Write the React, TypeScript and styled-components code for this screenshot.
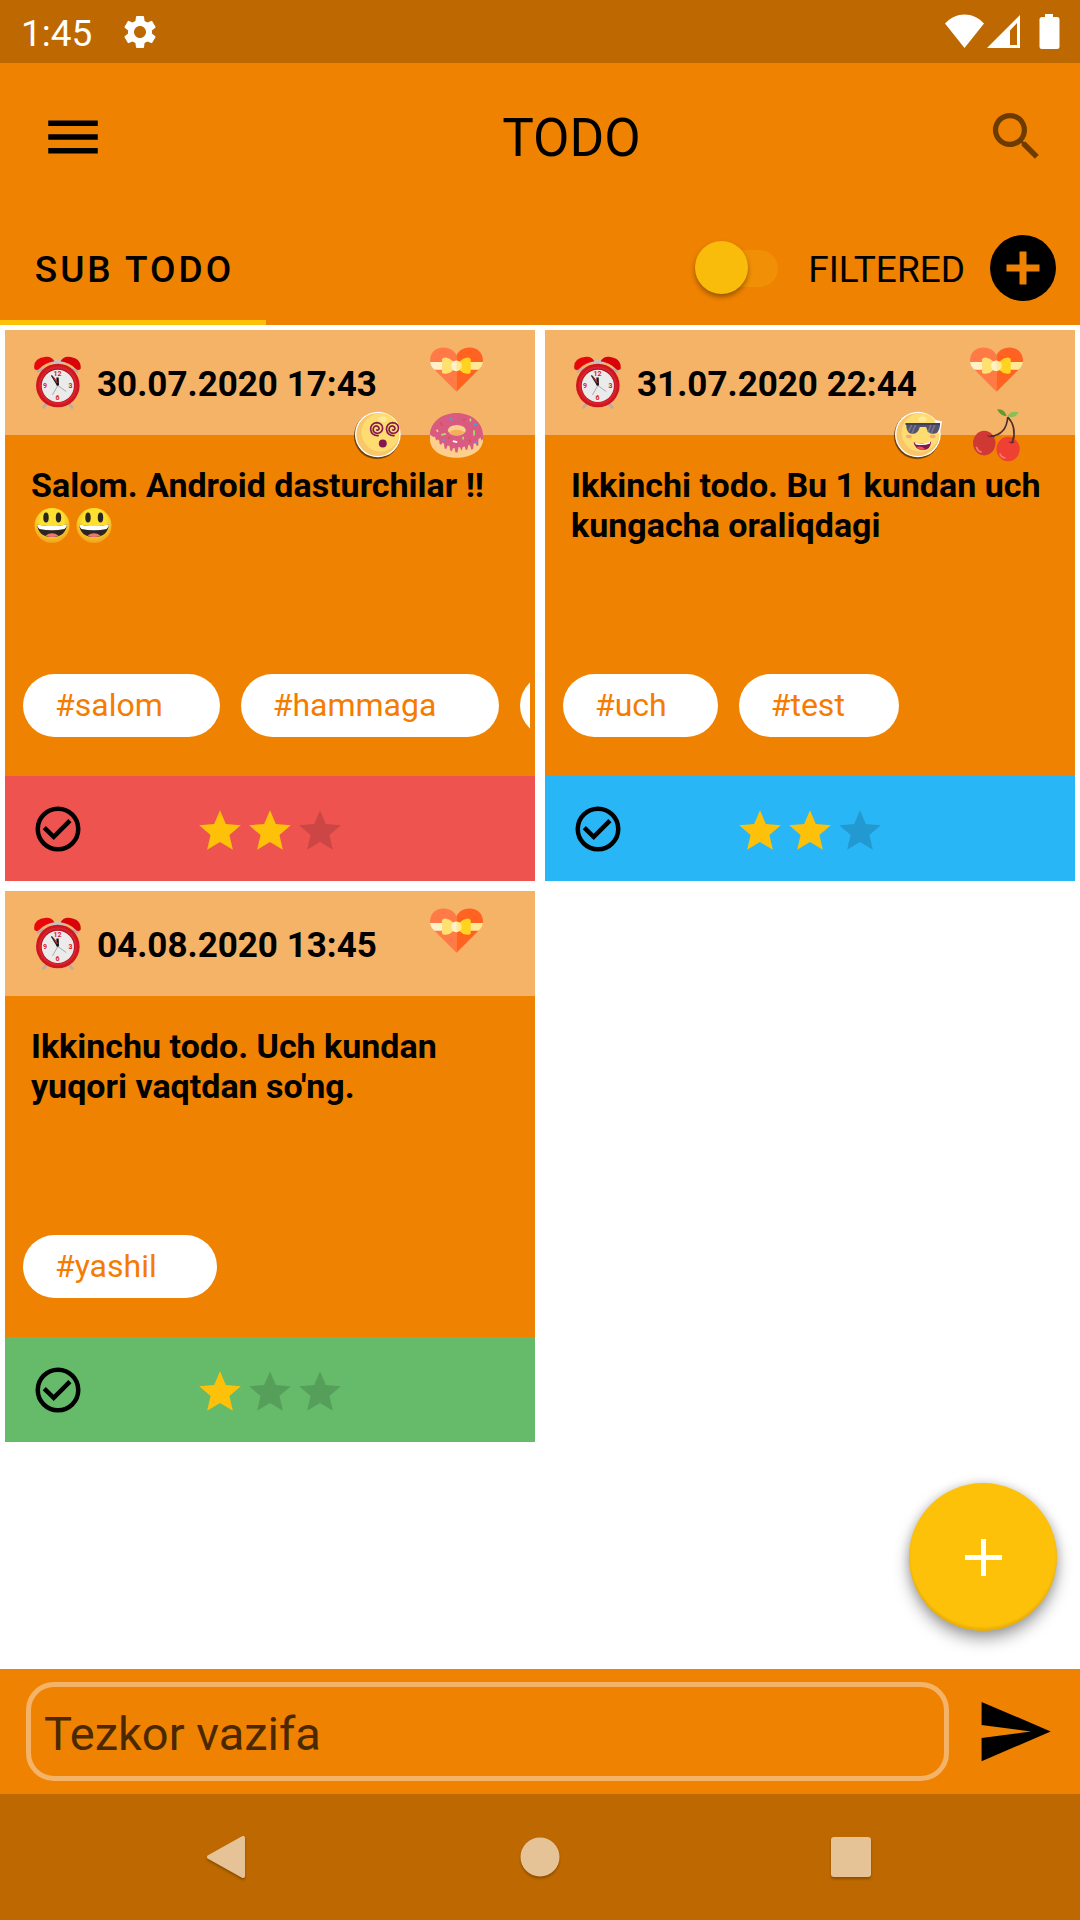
import React, { useState } from "react";
import styled, { createGlobalStyle } from "styled-components";
import { MdMenu, MdSearch, MdSettings, MdSend, MdStar } from "react-icons/md";

const color = {
  primary: "#ef8200",
  primaryDark: "#bd6800",
  accent: "#fdc109",
  soft: "#f5b368",
  tag: "#f57c00",
  nav: "#e5c397",
};

const GlobalStyle = createGlobalStyle`
  *, *::before, *::after { box-sizing: border-box; }
  body { margin: 0; background: #fff; }
  body, button, input { font-family: Roboto, "Liberation Sans", sans-serif; }
  svg { display: block; }
`;

const Screen = styled.div`
  min-height: 100vh;
  display: flex;
  flex-direction: column;
  color: #000;
`;

const PlainButton = styled.button`
  display: flex;
  align-items: center;
  justify-content: center;
  flex: none;
  padding: 0;
  border: 0;
  background: none;
  color: inherit;
  cursor: pointer;
`;

/* Status bar */
const StatusBar = styled.div`
  height: 63px;
  display: flex;
  align-items: center;
  padding: 0 19px 0 21px;
  background: ${color.primaryDark};
  color: #fff;
`;
const Clock = styled.time`
  padding-top: 4px;
  font-size: 37px;
  line-height: 44px;
  margin-right: 28px;
`;
const StatusIcons = styled.div`
  display: flex;
  margin-left: auto;
`;

/* App bar */
const Header = styled.header`
  background: ${color.primary};
`;
const Toolbar = styled.div`
  height: 147px;
  display: flex;
  align-items: center;
  padding-right: 19px;
`;
const MenuButton = styled(PlainButton)`
  width: 146px;
  height: 100px;
`;
const SearchButton = styled(PlainButton)`
  width: 90px;
  height: 90px;
  opacity: 0.54;
`;
const Title = styled.h1`
  flex: 1;
  margin: 0;
  padding: 2px 0 0 26px;
  text-align: center;
  font-size: 53px;
  line-height: 60px;
  font-weight: 400;
`;
const TabRow = styled.div`
  height: 115px;
  display: flex;
  align-items: center;
  padding-right: 24px;
`;
const Tab = styled(PlainButton)`
  width: 266px;
  align-self: stretch;
  padding: 9px 0 0 3px;
  border-bottom: 5px solid ${color.accent};
  font-size: 37px;
  line-height: 44px;
  font-weight: 500;
  letter-spacing: 3px;
`;
const FilterLabel = styled.label`
  display: flex;
  align-items: center;
  gap: 30px;
  margin: 0 25px 0 auto;
  font-size: 37px;
  line-height: 44px;
`;
const LabelText = styled.span`
  padding-top: 4px;
`;
const Switch = styled.input`
  appearance: none;
  position: relative;
  width: 83px;
  height: 54px;
  margin: 0;
  &::before {
    content: "";
    position: absolute;
    inset: 9px 0 8px 8px;
    border-radius: 19px;
    background: #f19006;
  }
  &::after {
    content: "";
    position: absolute;
    left: 0;
    top: 0;
    width: 53px;
    height: 53px;
    border-radius: 50%;
    background: #f9bc0b;
    box-shadow: 0 3px 5px rgba(0, 0, 0, 0.35);
  }
  &:checked::after {
    left: 30px;
  }
`;

/* Cards */
const Main = styled.main`
  flex: 1;
  position: relative;
  padding: 5px;
`;
const CardGrid = styled.div`
  display: grid;
  grid-template-columns: repeat(2, minmax(0, 1fr));
  gap: 10px;
`;
const Card = styled.article`
  position: relative;
  display: flex;
  flex-direction: column;
  background: ${color.primary};
`;
const CardHeader = styled.div`
  height: 105px;
  display: flex;
  align-items: center;
  gap: 16px;
  padding: 0 29px;
  background: ${color.soft};
`;
const DateText = styled.time`
  padding-top: 4px;
  font-size: 35px;
  line-height: 40px;
  font-weight: 700;
`;
const Stickers = styled.div`
  position: absolute;
  top: 13px;
  right: 52px;
  display: grid;
  grid-template-columns: repeat(2, 53px);
  gap: 13px 25px;
  direction: rtl;
`;
const StickerSlot = styled.span<{ $wide?: boolean }>`
  grid-column: ${(p) => (p.$wide ? "1 / -1" : "auto")};
  width: 53px;
  height: 53px;
`;
const CardBody = styled.div`
  height: 341px;
  display: flex;
  flex-direction: column;
  justify-content: space-between;
  padding: 30px 5px 39px;
`;
const CardText = styled.p`
  margin: 0;
  padding: 0 21px;
  font-size: 34px;
  line-height: 40px;
  font-weight: 700;
`;
const Smile = styled.svg`
  display: inline-block;
  width: 42px;
  height: 40px;
  vertical-align: top;
`;
const Tags = styled.ul`
  display: flex;
  gap: 21px;
  margin: 0;
  padding: 0 0 0 13px;
  overflow: hidden;
  list-style: none;
`;
/* Longer tags get a little more room after their text. */
const Tag = styled.li<{ $chars: number }>`
  flex: none;
  height: 63px;
  min-width: 90px;
  padding: 0 ${(p) => 39 + p.$chars * 3}px 0 32px;
  border-radius: 32px;
  background: #fff;
  color: ${color.tag};
  font-size: 32px;
  line-height: 63px;
`;
const CardFooter = styled.div<{ $tone: string }>`
  height: 105px;
  display: grid;
  grid-template-columns: 1fr auto 1fr;
  align-items: center;
  padding: 0 26px;
  background: ${(p) => p.$tone};
`;
const DoneButton = styled(PlainButton)`
  width: 54px;
  height: 54px;
`;
const Rating = styled.div`
  display: flex;
  padding-top: 5px;
`;
const StarIcon = styled(MdStar)<{ $on: boolean }>`
  width: 50px;
  height: 50px;
  color: ${(p) => (p.$on ? color.accent : "rgba(0, 0, 0, 0.15)")};
`;

const Fab = styled(PlainButton)`
  position: absolute;
  right: 23px;
  bottom: 38px;
  width: 148px;
  height: 148px;
  border-radius: 50%;
  background: ${color.accent};
  color: #fff;
  box-shadow: 0 8px 16px rgba(0, 0, 0, 0.36), 0 0 10px rgba(0, 0, 0, 0.14), inset 0 -3px 2px rgba(160, 110, 0, 0.2);
`;

/* Bottom */
const QuickForm = styled.form`
  display: flex;
  align-items: center;
  gap: 26px;
  padding: 13px 26px;
  background: ${color.primary};
`;
const QuickInput = styled.input`
  flex: 1;
  min-width: 0;
  height: 99px;
  padding: 4px 13px 0;
  border: 5px solid ${color.soft};
  border-radius: 28px;
  background: transparent;
  font-size: 47px;
  line-height: 56px;
  color: #000;
  outline: none;
  &::placeholder {
    color: #4a2800;
    opacity: 1;
  }
`;
const NavBar = styled.nav`
  height: 126px;
  display: flex;
  align-items: center;
  justify-content: center;
  gap: 209px;
  background: ${color.primaryDark};
`;
const NavButton = styled(PlainButton)`
  width: 102px;
  height: 102px;
  svg {
    filter: drop-shadow(0 2px 1px rgba(0, 0, 0, 0.25));
  }
`;

const SignalIcons = () => (
  <svg width="116" height="36" viewBox="0 0 116 36" fill="#fff" role="img" aria-label="Wi-Fi, signal, battery">
    <path d="M0 9.500C11-2.600 28-2.600 39 9.500L19.500 34z" />
    <path fillRule="evenodd" d="M42 34L75 1v33zM65 16.500V31h7V9z" />
    <path d="M100 0h8v3h4q2.500 0 2.500 2.500v27q0 2.500-2.500 2.500H97q-2.500 0-2.500-2.500v-27Q94.500 3 97 3h3z" />
  </svg>
);

const AlarmIcon = () => (
  <svg width="47" height="53" viewBox="0 0 140 158" aria-hidden="true">
    <path d="M38 142L26 156M104 142l12 14M50 32L8 46M90 32l42 14" stroke="#b9aca4" strokeWidth="8" />
    <path d="M42 24L60 12h20l18 12z" fill="#c9c0b8" />
    <path d="M1 38Q-4 6 36 2Q54 1 61 16Q34 20 16 38Q8 46 1 38z" fill="#e8080c" />
    <path d="M139 38Q142 6 104 2Q86 1 79 16Q106 20 124 38Q132 46 139 38z" fill="#d90409" />
    <circle cx="71" cy="88" r="65" fill="#cf1620" />
    <circle cx="71" cy="88" r="57" fill="#d9222b" />
    <circle cx="71" cy="88" r="50" fill="#a5121a" />
    <circle cx="71" cy="89" r="48" fill="#ebebeb" />
    <g fill="#e01822" fontFamily="Roboto, sans-serif" fontSize="21" fontWeight="700" textAnchor="middle">
      <text x="70" y="60">12</text>
      <text x="109" y="94">3</text>
      <text x="70" y="130">6</text>
      <text x="33" y="96">9</text>
    </g>
    <path d="M71 88L52 58" stroke="#222" strokeWidth="4" />
    <path d="M71 88L70 64" stroke="#111" strokeWidth="7" />
    <path d="M71 80L57 62" stroke="#c6141c" strokeWidth="3" />
    <path d="M71 88L96 106M71 88L55 116" stroke="#888" strokeWidth="2" />
  </svg>
);

const HeartSticker = () => (
  <svg width="53" height="53" viewBox="0 0 160 160" aria-hidden="true">
    <path d="M80 38C68 3 0 3 0 54Q1 68 10 77L80 147z" fill="#ff7a47" />
    <path d="M80 38C92 3 160 3 160 54Q159 68 150 77L80 147z" fill="#ff6221" />
    <path d="M0 57h80v24H14Q2 72 0 57z" fill="#fff2c9" />
    <path d="M80 57h80q-2 15-14 24H80z" fill="#ffe994" />
    <path d="M36 50Q38 43 48 44Q60 46 70 56V82Q60 92 48 93Q38 94 36 88z" fill="#ffe070" />
    <path d="M123 50Q121 43 112 44Q99 46 90 56V82Q99 92 112 93Q121 94 123 88z" fill="#ffd31f" />
    <circle cx="80" cy="69" r="16" fill="#ffe994" />
    <path d="M80 53a16 16 0 0 0 0 32z" fill="#fff2c9" />
  </svg>
);

const DonutSticker = () => (
  <svg width="53" height="53" viewBox="0 0 160 160" aria-hidden="true">
    <path d="M0 78H160V94C158 126 124 147 80 147S2 126 0 94z" fill="#fcd08c" />
    <path
      d="M0 78C0 40 36 12 80 12s80 28 80 66v12l-4 6-4-10-6 6v18l-5 2-3-9-6 1-2 17-5 2-4-13-5-2-3 14-5 2-3-11-6 2-4 11-4-10-5-1-3 16h-6l-3-14-5 2-3 8-5-2-2-13-6-2-4 11-5-2-2-15-5-2-3 6-5-2-1-11-4-4-3 4-4-4-2-9-3 3z"
      fill="#d95b82"
    />
    <ellipse cx="81" cy="64" rx="27" ry="16" fill="#fcd08c" />
    <path d="M57 70Q81 55 105 70Q81 90 57 70z" fill="#f5ae5e" />
    <g strokeWidth="5" fill="none">
      <path d="M60 26l8 9M130 46h12M40 98l4-7M136 104l6-6" stroke="#4e9fd8" />
      <path d="M122 29v9M34 78l14-3M133 64v16M100 84v8" stroke="#a6e26c" />
      <path d="M32 40l5 11M100 35l7-4M117 93l6 6M55 84l5 4" stroke="#e0503c" />
      <path d="M20 62l4 7" stroke="#fcd08c" />
      <path d="M69 97l13 3" stroke="#fff" />
    </g>
  </svg>
);

const CherrySticker = () => (
  <svg width="53" height="53" viewBox="0 0 160 160" aria-hidden="true">
    <path d="M114 24Q110 78 62 82M114 24Q142 54 129 100" fill="none" stroke="#4e2b30" strokeWidth="5" />
    <path d="M111 22Q91 22 82 1Q104-2 111 22z" fill="#5f9a31" />
    <path d="M112 22Q124 4 147 10Q136 30 112 22z" fill="#86c057" />
    <ellipse cx="43" cy="103" rx="34" ry="37" fill="#cf3833" />
    <ellipse cx="115" cy="121" rx="35" ry="37" fill="#ee4033" />
    <path d="M52 80Q61 86 70 80M118 99Q126 105 134 99" fill="none" stroke="#8e2222" strokeWidth="4" />
    <path d="M62 82L76 81M132 84L127 102" fill="none" stroke="#4e2b30" strokeWidth="5" />
    <path d="M19 114Q23 128 35 130M90 134Q94 146 107 148" fill="none" stroke="#f27f76" strokeWidth="5" />
  </svg>
);

const FaceBase = () => (
  <>
    <circle cx="75" cy="83" r="69" fill="#000" opacity="0.25" />
    <circle cx="76" cy="80" r="70" fill="#000" opacity="0.4" />
    <circle cx="78" cy="77" r="69" fill="#fff" />
    <circle cx="78" cy="77" r="65" fill="#f9c76b" />
    <ellipse cx="86" cy="71" rx="57" ry="58" fill="#fedc70" />
    <ellipse cx="92" cy="31" rx="13" ry="8" fill="#ffe99a" />
  </>
);

const DizzySticker = () => (
  <svg width="53" height="53" viewBox="0 0 160 160" aria-hidden="true">
    <FaceBase />
    <g fill="none" stroke="#83184f" strokeWidth="5">
      <path d="M81 80C50 84 48 42 75 41C101 43 96 77 73 73C56 66 66 47 77 52C87 58 79 68 73 62" />
      <path d="M129 80C98 84 96 42 123 41C149 43 144 77 121 73C104 66 114 47 125 52C135 58 127 68 121 62" />
    </g>
    <circle cx="93" cy="104" r="12" fill="#83184f" />
  </svg>
);

const CoolSticker = () => (
  <svg width="53" height="53" viewBox="0 0 160 160" aria-hidden="true">
    <FaceBase />
    <path d="M128 32L151 38L148 56L142 76L134 50z" fill="#fff" />
    <path d="M41 42H145V50Q142 74 126 75Q108 76 103 54H84Q78 76 61 75Q44 74 43 50z" fill="#54526b" />
    <path d="M60 46L50 68M72 46L60 74M118 46l-9 24M130 46l-12 28" stroke="#77768e" strokeWidth="5" />
    <path d="M41 42H145V48H41z" fill="#41405a" />
    <ellipse cx="51" cy="83" rx="9" ry="5" fill="#f9a879" />
    <ellipse cx="123" cy="83" rx="9" ry="5" fill="#f9a879" />
    <path d="M65 100Q94 108 118 99Q117 123 94 124Q69 122 65 100z" fill="#83184f" />
    <path d="M72 107Q94 112 115 104V99Q94 108 68 101z" fill="#fff" />
    <path d="M74 115Q90 110 100 121Q86 127 74 115z" fill="#fb4b50" />
  </svg>
);

const SmileIcon = () => (
  <Smile viewBox="0 0 42 40" role="img" aria-label="😃">
    <defs>
      <radialGradient id="smile" cx="50%" cy="35%" r="65%">
        <stop offset="50%" stopColor="#fde030" />
        <stop offset="100%" stopColor="#f2a01e" />
      </radialGradient>
    </defs>
    <circle cx="21" cy="20.500" r="17.500" fill="url(#smile)" />
    <ellipse cx="15" cy="12.500" rx="2.700" ry="5" fill="#2b2622" />
    <ellipse cx="27.500" cy="12.500" rx="2.700" ry="5" fill="#2b2622" />
    <path d="M6 19.500Q21 23 36 19.500Q34.500 32 21 32Q7.500 32 6 19.500z" fill="#2b2622" />
    <path d="M6 19.500Q21 22.500 36 19.500Q35.500 23 33.500 24Q21 26.500 8.500 24Q6.500 23 6 19.500z" fill="#fff" />
    <path d="M14.500 30.500Q21 26 27.500 30.500Q21 33.500 14.500 30.500z" fill="#ed7770" />
  </Smile>
);

const stickerIcons = {
  heart: HeartSticker,
  donut: DonutSticker,
  cherry: CherrySticker,
  dizzy: DizzySticker,
  cool: CoolSticker,
};

type Todo = {
  date: string;
  text: string;
  smiles?: number;
  stickers: (keyof typeof stickerIcons)[];
  tags: string[];
  stars: number;
  tone: string;
};

const todos: Todo[] = [
  {
    date: "30.07.2020 17:43",
    text: "Salom. Android dasturchilar !! ",
    smiles: 2,
    stickers: ["heart", "donut", "dizzy"],
    tags: ["#salom", "#hammaga", ""],
    stars: 2,
    tone: "#ef5350",
  },
  {
    date: "31.07.2020 22:44",
    text: "Ikkinchi todo. Bu 1 kundan uch kungacha oraliqdagi",
    stickers: ["heart", "cherry", "cool"],
    tags: ["#uch", "#test"],
    stars: 2,
    tone: "#29b6f6",
  },
  {
    date: "04.08.2020 13:45",
    text: "Ikkinchu todo. Uch kundan yuqori vaqtdan so'ng.",
    stickers: ["heart"],
    tags: ["#yashil"],
    stars: 1,
    tone: "#66bb6a",
  },
];

const TodoCard = ({ todo }: { todo: Todo }) => (
  <Card>
    <CardHeader>
      <AlarmIcon />
      <DateText>{todo.date}</DateText>
    </CardHeader>
    <CardBody>
      <CardText>
        {todo.text}
        {Array.from({ length: todo.smiles ?? 0 }, (_, i) => (
          <SmileIcon key={i} />
        ))}
      </CardText>
      <Tags>
        {todo.tags.map((tag) => (
          <Tag key={tag} $chars={tag.length}>
            {tag}
          </Tag>
        ))}
      </Tags>
    </CardBody>
    <CardFooter $tone={todo.tone}>
      <DoneButton type="button" aria-label="Done">
        <svg width="54" height="54" viewBox="0 0 24 24" fill="none" stroke="#000" strokeWidth="2">
          <circle cx="12" cy="12" r="9" />
          <path d="M5.900 11.400L10.100 15.500L17.300 8.300" />
        </svg>
      </DoneButton>
      <Rating role="img" aria-label={`${todo.stars} / 3`}>
        {[1, 2, 3].map((n) => (
          <StarIcon key={n} $on={n <= todo.stars} />
        ))}
      </Rating>
    </CardFooter>
    <Stickers>
      {todo.stickers.map((name, i) => {
        const Icon = stickerIcons[name];
        return (
          <StickerSlot key={name} $wide={i === 0}>
            <Icon />
          </StickerSlot>
        );
      })}
    </Stickers>
  </Card>
);

export default function App() {
  const [filtered, setFiltered] = useState(false);
  const [quick, setQuick] = useState("");
  return (
    <Screen>
      <GlobalStyle />
      <StatusBar>
        <Clock>1:45</Clock>
        <MdSettings size={40} />
        <StatusIcons>
          <SignalIcons />
        </StatusIcons>
      </StatusBar>
      <Header>
        <Toolbar>
          <MenuButton type="button" aria-label="Menu">
            <MdMenu size={66} />
          </MenuButton>
          <Title>TODO</Title>
          <SearchButton type="button" aria-label="Search">
            <MdSearch size={63} />
          </SearchButton>
        </Toolbar>
        <TabRow>
          <Tab type="button">SUB TODO</Tab>
          <FilterLabel>
            <Switch
              type="checkbox"
              role="switch"
              checked={filtered}
              onChange={(e) => setFiltered(e.target.checked)}
            />
            <LabelText>FILTERED</LabelText>
          </FilterLabel>
          <PlainButton type="button" aria-label="Add category">
            <svg width="66" height="66" viewBox="0 0 66 66">
              <circle cx="33" cy="33" r="33" fill="#000" />
              <path d="M33 16.500v33M16.500 33h33" stroke={color.primary} strokeWidth="7" />
            </svg>
          </PlainButton>
        </TabRow>
      </Header>
      <Main>
        <CardGrid>
          {todos.map((todo) => (
            <TodoCard key={todo.date} todo={todo} />
          ))}
        </CardGrid>
        <Fab type="button" aria-label="Add todo">
          <svg width="37" height="37" viewBox="0 0 37 37" stroke="currentColor" strokeWidth="5">
            <path d="M18.500 0v37M0 18.500h37" />
          </svg>
        </Fab>
      </Main>
      <QuickForm onSubmit={(e) => e.preventDefault()}>
        <QuickInput
          aria-label="Tezkor vazifa"
          placeholder="Tezkor vazifa"
          value={quick}
          onChange={(e) => setQuick(e.target.value)}
        />
        <PlainButton type="submit" aria-label="Send">
          <MdSend size={79} />
        </PlainButton>
      </QuickForm>
      <NavBar>
        <NavButton type="button" aria-label="Back">
          <svg width="48" height="44" viewBox="0 0 48 44">
            <path d="M38 3v38L4 22z" fill={color.nav} stroke={color.nav} strokeWidth="4" strokeLinejoin="round" />
          </svg>
        </NavButton>
        <NavButton type="button" aria-label="Home">
          <svg width="40" height="40" viewBox="0 0 40 40">
            <circle cx="20" cy="20" r="19.500" fill={color.nav} />
          </svg>
        </NavButton>
        <NavButton type="button" aria-label="Recent apps">
          <svg width="40" height="40" viewBox="0 0 40 40">
            <rect width="40" height="40" rx="3" fill={color.nav} />
          </svg>
        </NavButton>
      </NavBar>
    </Screen>
  );
}
